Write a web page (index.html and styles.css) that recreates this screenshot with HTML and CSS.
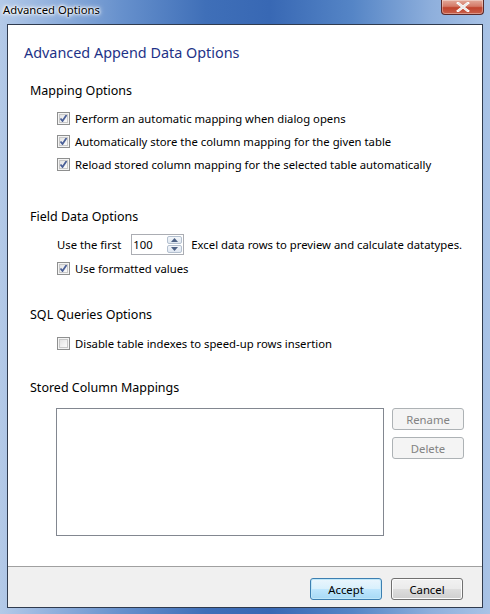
FILE: index.html
```html
<!DOCTYPE html>
<html>
<head>
<meta charset="utf-8">
<link rel="stylesheet" href="styles.css">
</head>
<body>
<div class="window">
  <div class="titlebar">
    <span class="title">Advanced Options</span>
    <div class="close"><svg width="14" height="10" viewBox="0 0 14 10"><path d="M2 1 L12 9 M12 1 L2 9" stroke="#fff" stroke-width="2.6" stroke-linecap="square"/><path d="M2 1 L12 9 M12 1 L2 9" stroke="#e8e8e8" stroke-width="1.4"/></svg></div>
  </div>
  <div class="client">
    <div class="main">
      <h1 class="heading">Advanced Append Data Options</h1>

      <div class="section s-map">
        <div class="sec-title">Mapping Options</div>
        <div class="opts">
          <div class="row"><span class="cb checked"></span><span>Perform an automatic mapping when dialog opens</span></div>
          <div class="row"><span class="cb checked"></span><span>Automatically store the column mapping for the given table</span></div>
          <div class="row"><span class="cb checked"></span><span>Reload stored column mapping for the selected table automatically</span></div>
        </div>
      </div>

      <div class="section s-field">
        <div class="sec-title">Field Data Options</div>
        <div class="opts">
          <div class="row spinrow"><span>Use the first</span>
            <span class="spin"><span class="spin-val">100</span><span class="spin-btns"><span class="sb up"><svg width="7" height="4" viewBox="0 0 7 4"><path d="M0 4 L3.5 0 L7 4Z" fill="#4d6185"/></svg></span><span class="sb down"><svg width="7" height="4" viewBox="0 0 7 4"><path d="M0 0 L3.5 4 L7 0Z" fill="#4d6185"/></svg></span></span></span>
            <span>Excel data rows to preview and calculate datatypes.</span></div>
          <div class="row r-fmt"><span class="cb checked"></span><span>Use formatted values</span></div>
        </div>
      </div>

      <div class="section s-sql">
        <div class="sec-title">SQL Queries Options</div>
        <div class="opts">
          <div class="row"><span class="cb"></span><span>Disable table indexes to speed-up rows insertion</span></div>
        </div>
      </div>

      <div class="section s-stored">
        <div class="sec-title">Stored Column Mappings</div>
        <div class="stored">
          <div class="listbox"></div>
          <div class="side">
            <button class="btn disabled">Rename</button>
            <button class="btn disabled">Delete</button>
          </div>
        </div>
      </div>
    </div>
    <div class="footer">
      <button class="btn default">Accept</button>
      <button class="btn">Cancel</button>
    </div>
  </div>
</div>
</body>
</html>
```
FILE: styles.css
```css
* { box-sizing: border-box; }
html, body { margin: 0; padding: 0; }
body {
  width: 490px; height: 614px; overflow: hidden;
  font-family: "Noto Sans", "Open Sans", sans-serif;
  font-size: 11.3px; color: #000;
}
.window {
  width: 490px; height: 614px;
  display: flex; flex-direction: column;
  background: linear-gradient(to right, #b4cae8 0%, #9ab7e0 8%, #6690cc 25%, #3f6fb8 42%, #3868b4 55%, #5585c6 72%, #8eafdc 88%, #a9c3e6 100%);
  padding: 0 7px 6px 7px;
}
.titlebar {
  height: 24px; flex: none;
  display: flex; align-items: flex-start; justify-content: space-between;
  margin: 0 -7px; padding: 0 7px 0 3px;
}
.title {
  font-size: 11.3px; line-height: 20px;
  text-shadow: 0 0 6px #fff, 0 0 4px #fff, 0 0 3px #fff, 0 0 2px #fff;
  color: #000;
}
.close {
  width: 43px; height: 15px; margin-right: -1px;
  border: 1px solid #5a2a2a; border-top: none;
  border-radius: 0 0 4px 4px;
  background: linear-gradient(to bottom, #e3a99a 0%, #d47a68 45%, #c0432d 55%, #c9604b 100%);
  box-shadow: inset 0 0 0 1px rgba(255,255,255,0.35);
  display: flex; align-items: center; justify-content: center;
}
.client {
  flex: 1; display: flex; flex-direction: column;
  border: 1px solid #303b4e;
  background: #fff;
}
.main { flex: 1; padding: 18px 0 0 16px; }
.heading {
  margin: 0; font-weight: normal; font-size: 14.4px; line-height: 20px;
  color: #1e3287;
}
.section { padding-left: 6px; }
.sec-title { font-size: 12.5px; line-height: 18px; }
.s-map { margin-top: 19px; }
.s-field { margin-top: 32px; }
.s-sql { margin-top: 26px; }
.s-stored { margin-top: 24px; }
.opts { padding-left: 27px; margin-top: 7px; }
.s-sql .opts { margin-top: 8px; }
.row { display: flex; align-items: center; height: 23px; gap: 5px; white-space: nowrap; }
.r-fmt { margin-top: 1px; }
.cb {
  width: 13px; height: 13px; flex: none;
  border: 1px solid #8e8f8f;
  background: linear-gradient(135deg, #dcdcdc 0%, #f4f4f4 60%, #fff 100%);
  box-shadow: inset 0 0 0 1px #f4f4f4, inset 0 0 0 2px #c8c8c8;
}
.cb.checked {
  background-image: url("data:image/svg+xml;utf8,<svg xmlns='http://www.w3.org/2000/svg' width='11' height='11' viewBox='0 0 11 11'><path d='M2.5 5.5 L4.5 8 L8.5 2' fill='none' stroke='%234a5f97' stroke-width='1.8'/></svg>"), linear-gradient(135deg, #dcdcdc 0%, #f4f4f4 60%, #fff 100%);
  background-repeat: no-repeat;
  background-position: center;
}
.spinrow { gap: 0; }
.spinrow > span { flex: none; }
.spin {
  margin-left: 10px; margin-right: 7px;
  width: 53px; height: 21px;
  border: 1px solid #abadb3;
  display: flex; align-items: center; justify-content: space-between;
  padding-left: 1px;
}
.spin-val { line-height: 18px; }
.spin-btns { display: flex; flex-direction: column; gap: 1px; margin-right: 1px; }
.sb {
  width: 15px; height: 8px;
  border: 1px solid #b4c0cf; border-radius: 2px;
  background: linear-gradient(#f3f6fa, #dfe7f1);
  display: flex; align-items: center; justify-content: center;
}
.stored { display: flex; gap: 8px; margin-top: 11px; padding-left: 26px; }
.listbox {
  width: 328px; height: 128px;
  border: 1px solid #828790;
  background: #fff;
}
.side { display: flex; flex-direction: column; gap: 7px; padding-top: 0; }
.btn {
  font-family: inherit; font-size: 11.3px;
  width: 72px; height: 22px; padding: 0;
  border: 1px solid #707070; border-radius: 3px;
  background: linear-gradient(to bottom, #f2f2f2 0%, #ebebeb 48%, #dddddd 52%, #cfcfcf 100%);
  box-shadow: inset 0 0 0 1px #fcfcfc;
  color: #000;
}
.btn.disabled {
  border-color: #adb2b5; background: #f4f4f4; color: #838383;
  box-shadow: none;
}
.btn.default {
  border-color: #3c7fb1;
  background: linear-gradient(to bottom, #eaf6fd 0%, #d9f0fc 48%, #bee6fd 52%, #a7d9f5 100%);
  box-shadow: inset 0 0 0 1px #bfe7f9;
}
.footer {
  flex: none; height: 41px;
  background: #f0f0f0; border-top: 1px solid #a0a0a0;
  display: flex; justify-content: flex-end; align-items: flex-start;
  gap: 9px; padding: 11px 19px 0 0;
}
```
